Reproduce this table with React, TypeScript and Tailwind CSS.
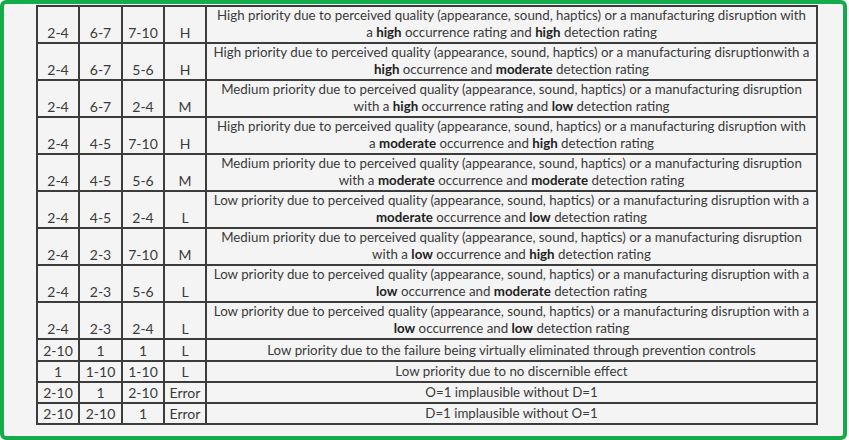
import React from "react";

type Row = {
  a: string;
  b: string;
  c: string;
  d: string;
  l1: React.ReactNode;
  l2?: React.ReactNode;
};

const B = ({ children }: { children: React.ReactNode }) => (
  <span className="font-bold text-[#222]">{children}</span>
);

const HQ = "High priority due to perceived quality (appearance, sound, haptics) or a manufacturing disruption";
const MQ = "Medium priority due to perceived quality (appearance, sound, haptics) or a manufacturing disruption";
const LQ = "Low priority due to perceived quality (appearance, sound, haptics) or a manufacturing disruption";

const rows: Row[] = [
  { a: "2-4", b: "6-7", c: "7-10", d: "H", l1: `${HQ} with`, l2: <>a <B>high</B> occurrence rating and <B>high</B> detection rating</> },
  { a: "2-4", b: "6-7", c: "5-6", d: "H", l1: `High priority due to perceived quality (appearance, sound, haptics) or a manufacturing disruptionwith a`, l2: <><B>high</B> occurrence and <B>moderate</B> detection rating</> },
  { a: "2-4", b: "6-7", c: "2-4", d: "M", l1: MQ, l2: <>with a <B>high</B> occurrence rating and <B>low</B> detection rating</> },
  { a: "2-4", b: "4-5", c: "7-10", d: "H", l1: `${HQ} with`, l2: <>a <B>moderate</B> occurrence and <B>high</B> detection rating</> },
  { a: "2-4", b: "4-5", c: "5-6", d: "M", l1: MQ, l2: <>with a <B>moderate</B> occurrence and <B>moderate</B> detection rating</> },
  { a: "2-4", b: "4-5", c: "2-4", d: "L", l1: `${LQ} with a`, l2: <><B>moderate</B> occurrence and <B>low</B> detection rating</> },
  { a: "2-4", b: "2-3", c: "7-10", d: "M", l1: MQ, l2: <>with a <B>low</B> occurrence and <B>high</B> detection rating</> },
  { a: "2-4", b: "2-3", c: "5-6", d: "L", l1: `${LQ} with a`, l2: <><B>low</B> occurrence and <B>moderate</B> detection rating</> },
  { a: "2-4", b: "2-3", c: "2-4", d: "L", l1: `${LQ} with a`, l2: <><B>low</B> occurrence and <B>low</B> detection rating</> },
  { a: "2-10", b: "1", c: "1", d: "L", l1: "Low priority due to the failure being virtually eliminated through prevention controls" },
  { a: "1", b: "1-10", c: "1-10", d: "L", l1: "Low priority due to no discernible effect" },
  { a: "2-10", b: "1", c: "2-10", d: "Error", l1: "O=1 implausible without D=1" },
  { a: "2-10", b: "2-10", c: "1", d: "Error", l1: "D=1 implausible without O=1" },
];

export default function App() {
  return (
    <div className="w-[849px] h-[440px] bg-white">
      <div
        className="w-[847px] h-[440px] border-4 border-[#12ad4a] rounded-[6px] bg-[#f4f4f4] pl-[32px] pt-px overflow-hidden"
        style={{ fontFamily: '"Lato", "Open Sans", sans-serif' }}
      >
        <div className="grid grid-cols-[42px_43px_42px_42px_611px] border-t-2 border-l-2 border-[#3c3c3c] w-[782px] text-[#3a3a3a]">
          {rows.map((r, i) => {
            const dbl = !!r.l2;
            const h = dbl ? "h-[37px]" : i === 9 ? "h-[22px]" : "h-[21px]";
            const num = `${h} border-r-2 border-b-2 border-[#3c3c3c] flex justify-center text-[14px] leading-[17px] ${dbl ? "items-end pb-[1px]" : "items-center"}`;
            return (
              <React.Fragment key={i}>
                <div className={num}>{r.a}</div>
                <div className={num}>{r.b}</div>
                <div className={num}>{r.c}</div>
                <div className={num}>{r.d}</div>
                <div
                  className={`${h} border-r-2 border-b-2 border-[#3c3c3c] flex flex-col items-center text-[13.3px] whitespace-nowrap ${dbl ? "justify-start pt-[0px] leading-[16.5px]" : "justify-center leading-[17px]"}`}
                >
                  <div>{r.l1}</div>
                  {r.l2 && <div>{r.l2}</div>}
                </div>
              </React.Fragment>
            );
          })}
        </div>
      </div>
    </div>
  );
}
